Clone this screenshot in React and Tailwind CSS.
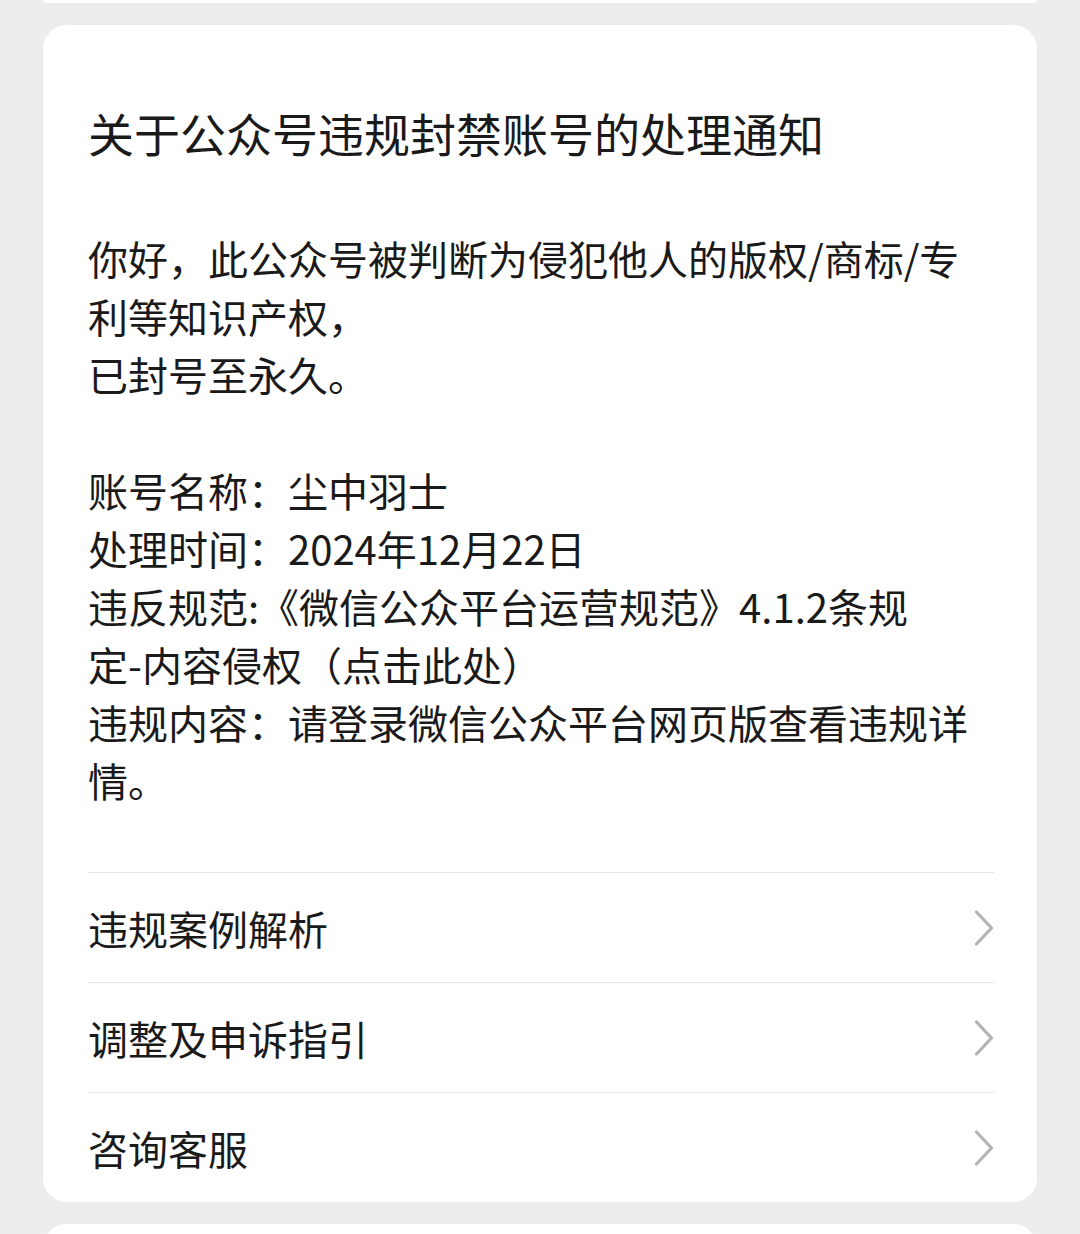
import React from "react";

const bodyLines = [
  "你好，此公众号被判断为侵犯他人的版权/商标/专",
  "利等知识产权，",
  "已封号至永久。",
  "",
  "账号名称：尘中羽士",
  "处理时间：2024年12月22日",
  "违反规范:《微信公众平台运营规范》4.1.2条规",
  "定-内容侵权（点击此处）",
  "违规内容：请登录微信公众平台网页版查看违规详",
  "情。",
];

const links = ["违规案例解析", "调整及申诉指引", "咨询客服"];

function Chevron() {
  return (
    <svg width="20" height="36" viewBox="0 0 20 36" fill="none" className="shrink-0">
      <path d="M2.5 2L17.5 18L2.5 34" stroke="#b3b3b3" strokeWidth="3.2" strokeLinecap="round" strokeLinejoin="round" />
    </svg>
  );
}

export default function App() {
  return (
    <div className="h-[1234px] overflow-hidden bg-[#ededed] font-['Noto_Sans_CJK_SC','Noto_Sans',sans-serif] text-[#1a1a1a]">
      <div className="mx-[43px] h-[3px] rounded-b-[3px] bg-white" />

      <div className="mx-[43px] mt-[22px] rounded-[24px] bg-white pl-[45px] pr-[43px] pt-[78px]">
        <h1 className="whitespace-nowrap text-[46px] font-normal leading-[58px]">
          关于公众号违规封禁账号的处理通知
        </h1>

        <div className="mt-[68px] text-[40px] leading-[58px]">
          {bodyLines.map((line, i) => (
            <div key={i} className="h-[58px] whitespace-nowrap">
              {line}
            </div>
          ))}
        </div>

        <div className="mt-[63px]">
          {links.map((label) => (
            <div
              key={label}
              className="flex h-[110px] items-center justify-between border-t border-[#e6e6e6]"
            >
              <span className="text-[40px] leading-[58px]">{label}</span>
              <Chevron />
            </div>
          ))}
        </div>
      </div>

      <div className="mx-[43px] mt-[22px] h-[40px] rounded-t-[24px] bg-white" />
    </div>
  );
}
